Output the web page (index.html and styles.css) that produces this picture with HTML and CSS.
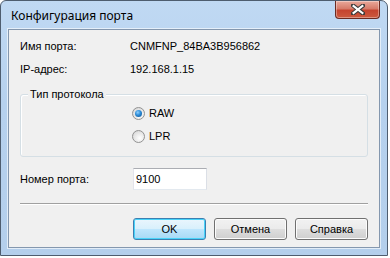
FILE: index.html
```html
<!DOCTYPE html>
<html lang="ru">
<head>
<meta charset="UTF-8">
<title>Конфигурация порта</title>
<link rel="stylesheet" href="styles.css">
</head>
<body>
    <div class="window">
        <div class="titlebar">
            <span class="title">Конфигурация порта</span>
            <button class="close" type="button">
                <svg width="14" height="11" viewBox="0 0 14 11">
                    <path d="M2 1.5 L12 9.5 M12 1.5 L2 9.5" stroke="#3b3b3b" stroke-width="4.2" stroke-linecap="square"/>
                    <path d="M2.6 2 L11.4 9 M11.4 2 L2.6 9" stroke="#fff" stroke-width="2.2" stroke-linecap="square"/>
                </svg>
            </button>
        </div>
        <div class="client">
            <div class="row">
                <span class="label">Имя порта:</span>
                <span class="value">CNMFNP_84BA3B956862</span>
            </div>
            <div class="row">
                <span class="label">IP-адрес:</span>
                <span class="value">192.168.1.15</span>
            </div>

            <div class="group">
                <span class="legend">Тип протокола</span>
                <label class="radio-row">
                    <span class="radio checked"></span>
                    <span>RAW</span>
                </label>
                <label class="radio-row">
                    <span class="radio"></span>
                    <span>LPR</span>
                </label>
            </div>

            <div class="row port-row">
                <span class="label">Номер порта:</span>
                <input class="port-input" type="text" value="9100">
            </div>

            <div class="separator"></div>

            <div class="buttons">
                <button class="btn default" type="button">OK</button>
                <button class="btn" type="button">Отмена</button>
                <button class="btn" type="button">Справка</button>
            </div>
        </div>
    </div>
</body>
</html>
```

FILE: styles.css
```css
body {
    margin: 0;
    background-color: #ffffff;
    font-family: "Liberation Sans", Arial, sans-serif;
    font-size: 11px;
    color: #000;
}
.window {
    width: 388px;
    height: 256px;
    padding: 0 7px 6px 7px;
    box-sizing: border-box;
    border: 1px solid #4e5d6f;
    border-radius: 6px 7px 0 0;
    background: linear-gradient(to bottom, #c0d9f3 0%, #b6d1ee 40%, #b4cfec 100%);
}
.titlebar {
    height: 28px;
    display: flex;
    justify-content: space-between;
    align-items: flex-start;
}
.title {
    font-family: "Noto Sans", "Open Sans", sans-serif;
    font-size: 12px;
    line-height: 14px;
    margin: 8px 0 0 3px;
    color: #000;
}
.close {
    width: 45px;
    height: 18px;
    padding: 0;
    margin-right: 0;
    border: 1px solid #6b2b22;
    border-top: none;
    border-radius: 0 0 4px 4px;
    background: linear-gradient(to bottom, #e9a99b 0%, #d67b6a 45%, #c5442f 55%, #cc5a3f 100%);
    box-shadow: inset 0 0 0 1px rgba(255, 255, 255, 0.35);
    display: flex;
    align-items: center;
    justify-content: center;
}
.client {
    border: 1px solid #8497ae;
    box-shadow: 0 0 0 1px rgba(255, 255, 255, 0.6);
    background-color: #f0f0f0;
    padding: 10px 11px 7px 11px;
}
.row {
    display: flex;
    align-items: center;
    line-height: 13px;
    height: 13px;
}
.row + .row {
    margin-top: 10px;
}
.label {
    width: 110px;
    flex-shrink: 0;
}
.group {
    position: relative;
    margin-top: 18px;
    height: 63px;
    box-sizing: border-box;
    border: 1px solid #d5dfe5;
    border-radius: 3px;
    box-shadow: inset 1px 1px 0 #fff;
    padding: 12px 0 0 111px;
}
.legend {
    position: absolute;
    left: 7px;
    top: -7px;
    padding: 0 2px;
    line-height: 13px;
    background-color: #f0f0f0;
}
.radio-row {
    display: flex;
    align-items: center;
    height: 13px;
    line-height: 13px;
}
.radio-row + .radio-row {
    margin-top: 10px;
}
.radio {
    width: 11px;
    height: 11px;
    margin-right: 4px;
    border: 1px solid #929292;
    border-radius: 50%;
    background: radial-gradient(circle at 60% 65%, #ffffff 0%, #e6e6e6 55%, #cfcfcf 100%);
    position: relative;
}
.radio.checked::after {
    content: "";
    position: absolute;
    left: 2px;
    top: 2px;
    width: 7px;
    height: 7px;
    border-radius: 50%;
    background: radial-gradient(circle at 40% 35%, #8fd0ff 0%, #2a8ad6 45%, #0d4d8a 100%);
}
.port-row {
    margin-top: 11px;
    height: 22px;
}
.port-input {
    width: 74px;
    height: 22px;
    box-sizing: border-box;
    margin-left: 3px;
    padding: 0 2px;
    border: 1px solid #abadb3;
    border-left-color: #e2e3ea;
    border-right-color: #dbdfe6;
    border-bottom-color: #e3e9ef;
    background-color: #fff;
    font-family: "Liberation Sans", Arial, sans-serif;
    font-size: 11px;
    color: #000;
    outline: none;
}
.separator {
    margin-top: 13px;
    height: 1px;
    background-color: #a0a0a0;
    border-bottom: 1px solid #fff;
}
.buttons {
    margin-top: 13px;
    display: flex;
    justify-content: flex-end;
    gap: 8px;
}
.btn {
    width: 73px;
    height: 22px;
    padding: 0;
    border: 1px solid #707070;
    border-radius: 3px;
    background: linear-gradient(to bottom, #f2f2f2 0%, #ebebeb 48%, #dddddd 52%, #cfcfcf 100%);
    box-shadow: inset 0 0 0 1px #fcfcfc;
    font-family: "Liberation Sans", Arial, sans-serif;
    font-size: 11px;
    color: #000;
}
.btn.default {
    border-color: #3c7fb1;
    background: linear-gradient(to bottom, #eaf6fd 0%, #d9f0fc 48%, #bee6fd 52%, #a7d9f5 100%);
    box-shadow: inset 0 0 0 1px #48d3f9;
}
```
